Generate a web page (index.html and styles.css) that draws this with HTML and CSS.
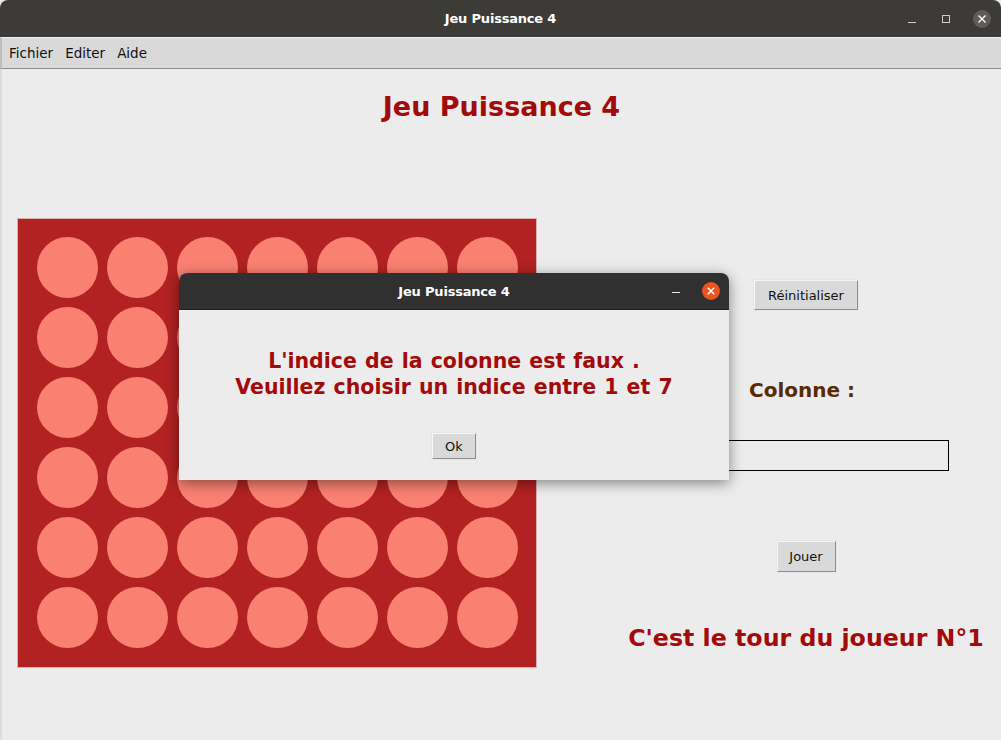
FILE: index.html
```html
<!DOCTYPE html>
<html lang="fr">
<head>
<meta charset="utf-8">
<title>Jeu Puissance 4</title>
<link rel="stylesheet" href="styles.css">
</head>
<body>
<div class="window">
  <div class="titlebar">
    <span class="title">Jeu Puissance 4</span>
    <div class="wm-buttons">
      <span class="wm-min"></span>
      <span class="wm-max"></span>
      <span class="wm-close"><svg width="10" height="10" viewBox="0 0 10 10"><path d="M1.5 1.5 L8.5 8.5 M8.5 1.5 L1.5 8.5" stroke="#fff" stroke-width="1.4"/></svg></span>
    </div>
  </div>
  <div class="menubar">
    <span class="menu-item">Fichier</span>
    <span class="menu-item">Editer</span>
    <span class="menu-item">Aide</span>
  </div>
  <div class="content">
    <h1 class="heading">Jeu Puissance 4</h1>
    <div class="main">
      <div class="board">
        <span class="cell"></span><span class="cell"></span><span class="cell"></span><span class="cell"></span><span class="cell"></span><span class="cell"></span><span class="cell"></span>
        <span class="cell"></span><span class="cell"></span><span class="cell"></span><span class="cell"></span><span class="cell"></span><span class="cell"></span><span class="cell"></span>
        <span class="cell"></span><span class="cell"></span><span class="cell"></span><span class="cell"></span><span class="cell"></span><span class="cell"></span><span class="cell"></span>
        <span class="cell"></span><span class="cell"></span><span class="cell"></span><span class="cell"></span><span class="cell"></span><span class="cell"></span><span class="cell"></span>
        <span class="cell"></span><span class="cell"></span><span class="cell"></span><span class="cell"></span><span class="cell"></span><span class="cell"></span><span class="cell"></span>
        <span class="cell"></span><span class="cell"></span><span class="cell"></span><span class="cell"></span><span class="cell"></span><span class="cell"></span><span class="cell"></span>
      </div>
      <div class="panel">
        <button class="tk-button btn-reset">Réinitialiser</button>
        <div class="label-col">Colonne :</div>
        <input class="entry" type="text">
        <button class="tk-button btn-play">Jouer</button>
        <div class="turn">C'est le tour du joueur N°1</div>
      </div>
    </div>
  </div>

  <div class="dialog">
    <div class="dlg-titlebar">
      <span class="dlg-title">Jeu Puissance 4</span>
      <span class="dlg-min"></span>
      <span class="dlg-close"><svg width="10" height="10" viewBox="0 0 10 10"><path d="M1.8 1.8 L8.2 8.2 M8.2 1.8 L1.8 8.2" stroke="#fff" stroke-width="1.5"/></svg></span>
    </div>
    <div class="dlg-body">
      <p class="dlg-msg">L'indice de la colonne est faux .<br>Veuillez choisir un indice entre 1 et 7</p>
      <button class="tk-button btn-ok">Ok</button>
    </div>
  </div>
</div>
</body>
</html>
```

FILE: styles.css
```css
html, body {
  margin: 0;
  padding: 0;
  background: #ececec;
}

.window {
  position: relative;
  width: 1001px;
  height: 740px;
  overflow: hidden;
  background: #ececec;
  font-family: "DejaVu Sans", sans-serif;
}

.titlebar {
  height: 37px;
  background: #3d3b38;
  border-radius: 8px 8px 0 0;
  display: flex;
  align-items: center;
  justify-content: center;
  position: relative;
}

.title {
  color: #ffffff;
  font-weight: bold;
  font-size: 13px;
  letter-spacing: -0.2px;
}

.wm-buttons {
  position: absolute;
  right: 10px;
  top: 0;
  height: 37px;
  display: flex;
  align-items: center;
}

.wm-min {
  width: 8px;
  height: 1px;
  background: #cfcfcf;
  margin-top: 7px;
  margin-right: 26px;
}

.wm-max {
  width: 6px;
  height: 6px;
  border: 1px solid #cfcfcf;
  margin-right: 23px;
}

.wm-close {
  width: 18px;
  height: 18px;
  border-radius: 50%;
  background: #5e5d5a;
  display: flex;
  align-items: center;
  justify-content: center;
}

.menubar {
  height: 32px;
  background: #d9d9d9;
  border-top: 1px solid #f2f2f2;
  border-bottom: 1px solid #8c8c8c;
  border-left: 2px solid #bdbdbd;
  display: flex;
  align-items: center;
  padding-left: 7px;
  box-sizing: border-box;
}

.menu-item {
  font-size: 13.5px;
  color: #111;
  margin-right: 12px;
}

.content {
  border-left: 2px solid #dcdcdc;
  height: 672px;
  box-sizing: border-box;
}

.heading {
  margin: 0;
  padding-top: 23px;
  text-align: center;
  font-size: 27px;
  font-weight: bold;
  color: #a30a0a;
  line-height: 30px;
}

.main {
  display: flex;
  margin-top: 96px;
  padding-left: 15px;
}

.board {
  width: 520px;
  height: 450px;
  box-sizing: border-box;
  background: #b22222;
  padding: 18px 20px 20px 19px;
  display: grid;
  grid-template-columns: repeat(7, 61px);
  grid-auto-rows: 61px;
  column-gap: 9px;
  row-gap: 9px;
  border: 1px solid #d8b0b0;
}

.cell {
  display: block;
  border-radius: 50%;
  background: #fa8072;
}

.panel {
  width: 390px;
  margin-left: 74px;
  display: flex;
  flex-direction: column;
  align-items: center;
}

.tk-button {
  font-family: "DejaVu Sans", sans-serif;
  font-size: 13px;
  color: #111;
  background: #d9d9d9;
  border: 1px solid;
  border-color: #f6f6f6 #8e8e8e #8e8e8e #f6f6f6;
  padding: 0;
  height: 30px;
  box-sizing: border-box;
  outline: 1px solid #e6e6e6;
}

.btn-reset {
  width: 104px;
  margin-top: 62px;
}

.label-col {
  margin-top: 68px;
  font-size: 20px;
  font-weight: bold;
  color: #5a2a00;
  line-height: 24px;
  margin-right: 8px;
}

.entry {
  margin-top: 38px;
  width: 284px;
  height: 31px;
  box-sizing: border-box;
  border: 1px solid #000;
  background: #ececec;
  padding: 0;
  margin-left: 2px;
}

.btn-play {
  width: 59px;
  margin-top: 70px;
  height: 31px;
}

.turn {
  margin-top: 52px;
  font-size: 23.7px;
  font-weight: bold;
  color: #a30a0a;
  line-height: 28px;
  white-space: nowrap;
}

.dialog {
  position: absolute;
  left: 179px;
  top: 273px;
  width: 550px;
  height: 207px;
  background: #ececec;
  border-radius: 8px 8px 0 0;
  box-shadow: 0 3px 14px rgba(0, 0, 0, 0.45);
  display: flex;
  flex-direction: column;
}

.dlg-titlebar {
  height: 37px;
  background: #303030;
  border-radius: 8px 8px 0 0;
  display: flex;
  align-items: center;
  justify-content: center;
  position: relative;
  border-bottom: 1px solid #1f1f1f;
  box-sizing: border-box;
}

.dlg-title {
  color: #fff;
  font-weight: bold;
  font-size: 13px;
  letter-spacing: -0.2px;
}

.dlg-min {
  position: absolute;
  left: 493px;
  top: 19px;
  width: 8px;
  height: 1px;
  background: #e6e6e6;
}

.dlg-close {
  position: absolute;
  left: 523px;
  top: 9px;
  width: 18px;
  height: 18px;
  border-radius: 50%;
  background: #e95420;
  display: flex;
  align-items: center;
  justify-content: center;
}

.dlg-body {
  flex: 1;
  display: flex;
  flex-direction: column;
  align-items: center;
}

.dlg-msg {
  margin: 38px 0 0 0;
  text-align: center;
  font-size: 20.5px;
  font-weight: bold;
  color: #a30a0a;
  line-height: 26px;
  word-spacing: 1px;
}

.btn-ok {
  margin-top: 33px;
  width: 44px;
  height: 26px;
}
```
